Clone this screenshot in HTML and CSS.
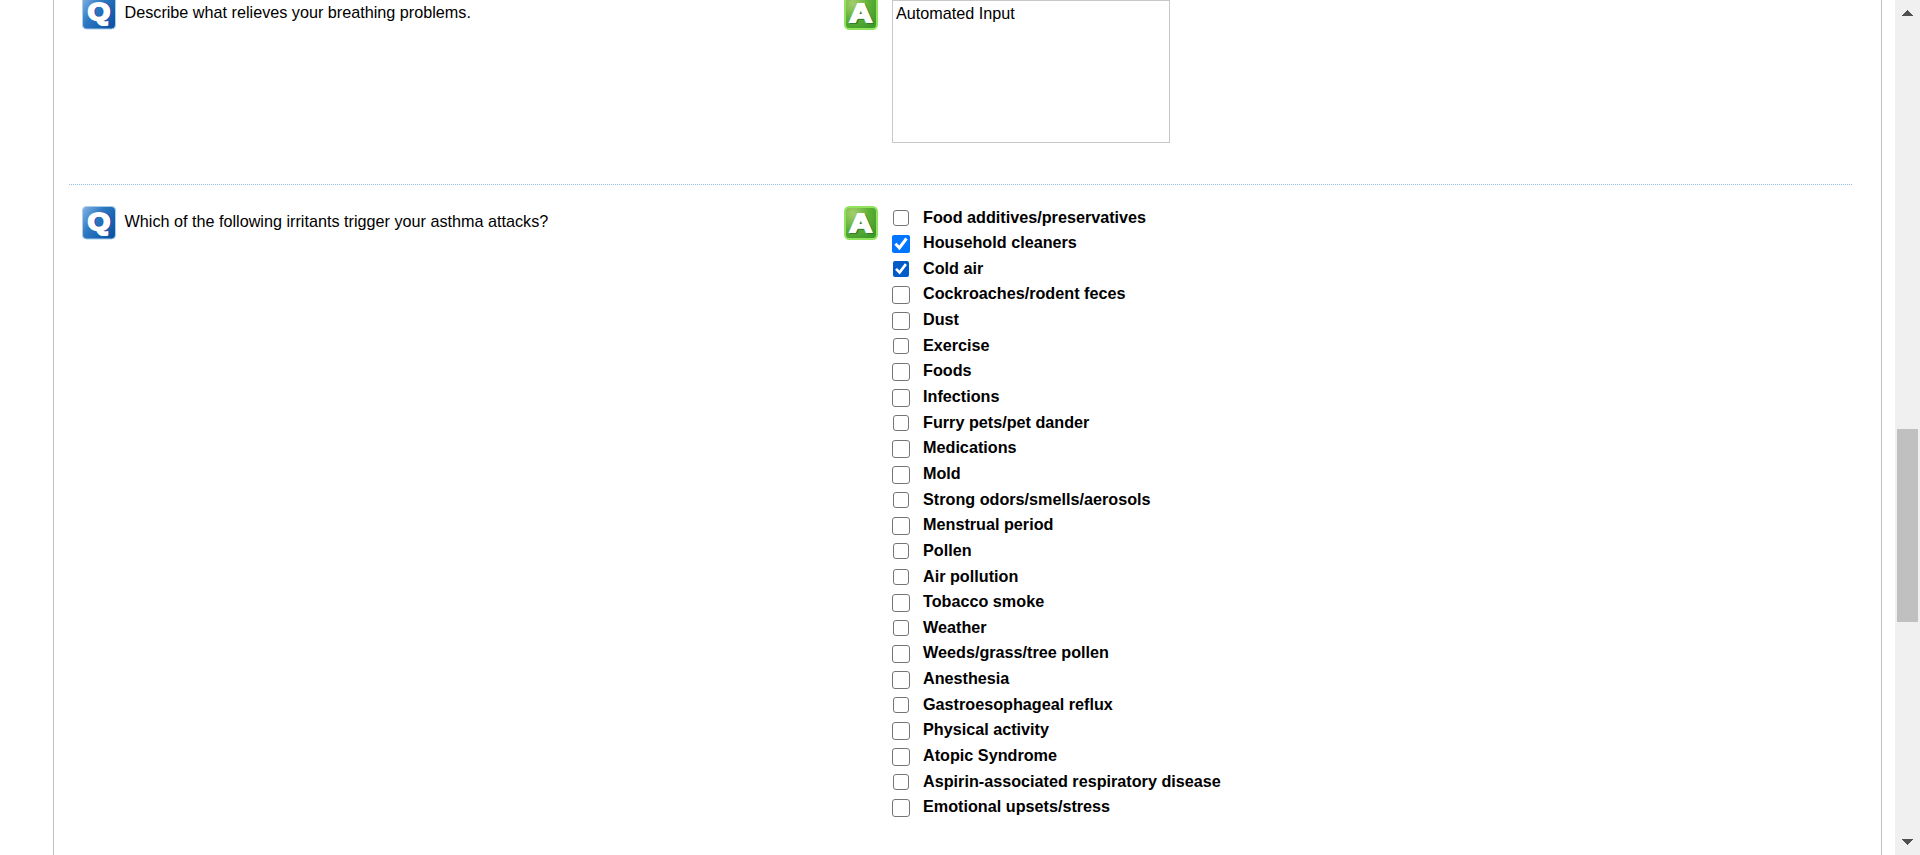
FILE: index.html
```html
<!DOCTYPE html>
<html lang="en">
<head>
<meta charset="utf-8">
<title>Asthma questionnaire</title>
<link rel="stylesheet" href="styles.css">
</head>
<body>
<svg class="defs" width="0" height="0" aria-hidden="true">
  <defs>
    <linearGradient id="blue" x1="0" y1="0" x2="1" y2="0.7"><stop offset="0" stop-color="#86b4e6"/><stop offset="0.45" stop-color="#2f78c2"/><stop offset="1" stop-color="#0a57a6"/></linearGradient>
    <radialGradient id="green" cx="0.25" cy="0.2" r="0.9"><stop offset="0" stop-color="#a5cf6c"/><stop offset="0.55" stop-color="#5fb035"/><stop offset="1" stop-color="#3f9a2c"/></radialGradient>
    <symbol id="q-icon" viewBox="0 0 34 34">
      <rect x="0.5" y="0.5" width="33" height="32.5" rx="4" fill="url(#blue)" stroke="#a9cdea"/>
      <g transform="translate(17 23.6) scale(1.2 1)">
        <text class="glyph glyph-q" x="0.8" y="0.8" fill="#2b3f9c" stroke="#2b3f9c">Q</text>
        <text class="glyph glyph-q" x="0" y="0" fill="#fff" stroke="#fff">Q</text>
      </g>
    </symbol>
    <symbol id="a-icon" viewBox="0 0 34 34">
      <rect x="1" y="1" width="32" height="32" rx="4.5" fill="url(#green)" stroke="#90e35c" stroke-width="2"/>
      <g transform="translate(16.8 25.6) scale(1.2 1)">
        <text class="glyph" x="1" y="0.9" fill="#2f7d2c" stroke="#2f7d2c">A</text>
        <text class="glyph" x="0" y="0" fill="#fff" stroke="#fff">A</text>
      </g>
    </symbol>
  </defs>
</svg>
<div class="window">
  <main class="panel">
    <section class="entry entry-first">
      <div class="question"><svg class="icon"><use href="#q-icon"/></svg><p class="prompt">Describe what relieves your breathing problems.</p></div>
      <div class="answer"><svg class="icon"><use href="#a-icon"/></svg><div class="field">Automated Input</div></div>
    </section>
    <div class="divider"></div>
    <section class="entry entry-second">
      <div class="question"><svg class="icon"><use href="#q-icon"/></svg><p class="prompt">Which of the following irritants trigger your asthma attacks?</p></div>
      <div class="answer"><svg class="icon"><use href="#a-icon"/></svg>
        <div class="options">
          <label class="option short"><input type="checkbox" class="box small"><span>Food additives/preservatives</span></label>
          <label class="option"><input type="checkbox" class="box" checked><span>Household cleaners</span></label>
          <label class="option short"><input type="checkbox" class="box small hovered" checked><span>Cold air</span></label>
          <label class="option"><input type="checkbox" class="box"><span>Cockroaches/rodent feces</span></label>
          <label class="option"><input type="checkbox" class="box"><span>Dust</span></label>
          <label class="option short"><input type="checkbox" class="box small"><span>Exercise</span></label>
          <label class="option"><input type="checkbox" class="box"><span>Foods</span></label>
          <label class="option"><input type="checkbox" class="box"><span>Infections</span></label>
          <label class="option short"><input type="checkbox" class="box small"><span>Furry pets/pet dander</span></label>
          <label class="option"><input type="checkbox" class="box"><span>Medications</span></label>
          <label class="option"><input type="checkbox" class="box"><span>Mold</span></label>
          <label class="option short"><input type="checkbox" class="box small"><span>Strong odors/smells/aerosols</span></label>
          <label class="option"><input type="checkbox" class="box"><span>Menstrual period</span></label>
          <label class="option"><input type="checkbox" class="box small"><span>Pollen</span></label>
          <label class="option short"><input type="checkbox" class="box small"><span>Air pollution</span></label>
          <label class="option"><input type="checkbox" class="box"><span>Tobacco smoke</span></label>
          <label class="option short"><input type="checkbox" class="box small"><span>Weather</span></label>
          <label class="option"><input type="checkbox" class="box"><span>Weeds/grass/tree pollen</span></label>
          <label class="option"><input type="checkbox" class="box"><span>Anesthesia</span></label>
          <label class="option short"><input type="checkbox" class="box small"><span>Gastroesophageal reflux</span></label>
          <label class="option"><input type="checkbox" class="box"><span>Physical activity</span></label>
          <label class="option"><input type="checkbox" class="box"><span>Atopic Syndrome</span></label>
          <label class="option short"><input type="checkbox" class="box small"><span>Aspirin-associated respiratory disease</span></label>
          <label class="option"><input type="checkbox" class="box"><span>Emotional upsets/stress</span></label>
        </div>
      </div>
    </section>
  </main>
  <div class="scrollbar">
    <svg class="arrow" width="11" height="6" viewBox="0 0 11 6" shape-rendering="crispEdges"><path d="M0 6h11L5.5 0z" fill="#505050"/></svg>
    <div class="thumb"></div>
    <svg class="arrow arrow-down" width="11" height="6" viewBox="0 0 11 6" shape-rendering="crispEdges"><path d="M0 0h11L5.5 6z" fill="#505050"/></svg>
  </div>
</div>
</body>
</html>
```
FILE: styles.css
```css
* { box-sizing: border-box; }
body {
  margin: 0;
  overflow: hidden;
  background: #fff;
  color: #000;
  font: 16.2px/20px "Liberation Sans", Arial, sans-serif;
}
.defs { display: block; height: 0; }
.window { display: flex; height: 855px; }
.panel {
  flex: none;
  width: 1829px;
  margin: 0 13px 0 53px;
  padding: 0 28px 0 15px;
  border: solid #c0c0c0;
  border-width: 0 1px;
  overflow: hidden;
}
.entry {
  display: grid;
  grid-template-columns: 762.5px 1fr;
  padding-left: 12.5px;
}
.entry-first { height: 184px; }
.entry-first .icon { margin-top: -4px; }
.entry-second { padding-top: 21px; }
.question, .answer { display: flex; align-items: flex-start; }
.icon { flex: none; width: 34px; height: 34px; }
.glyph {
  font: bold 26px "Liberation Sans", Arial, sans-serif;
  text-anchor: middle;
  stroke-width: 2px;
}
.glyph-q { font-size: 24px; }
.prompt { margin: 2px 0 0 9px; }
.entry-second .prompt { margin-top: 5px; }
.field {
  width: 278px;
  height: 143px;
  margin-left: 14px;
  padding: 2px 3px;
  border: 1px solid #c8c8c8;
}
.divider {
  height: 1px;
  background: repeating-linear-gradient(90deg, #9cc1e6 0 1px, #f4f9fd 1px 2px);
}
.options { margin: 4px 0 0 14px; }
.option {
  display: flex;
  align-items: flex-start;
  height: 26px;
  font-weight: bold;
  line-height: 18px;
}
.option.short { height: 25px; }
/* The pitch averages 25.6px; the third row ends a long pair early. */
.option span { margin-top: -2px; }
.box {
  flex: none;
  appearance: none;
  width: 18px;
  height: 18px;
  margin: 0 13px 0 0;
  border: 1px solid #767676;
  border-radius: 3px;
  background: #fff;
}
.box.small { width: 16px; height: 16px; margin: 0 14px 0 1px; }
.box:checked {
  border: 0;
  border-radius: 2px;
  background: #0075ff;
}
.box.hovered:checked { background: #005cc8; }
.box:checked::before {
  content: "";
  display: block;
  width: 100%;
  height: 100%;
  background: #fff;
  clip-path: polygon(13% 54%, 25% 43%, 40% 59%, 74% 14%, 87% 25%, 42% 85%);
}
.scrollbar {
  display: flex;
  flex: none;
  flex-direction: column;
  align-items: center;
  width: 25px;
  padding: 10px 0;
  background: #f0f0f0;
}
.arrow { flex: none; display: block; }
.thumb { flex: none; width: 21px; height: 193px; margin-top: 413px; background: #c0c0c0; }
.arrow-down { margin-top: auto; }
```
